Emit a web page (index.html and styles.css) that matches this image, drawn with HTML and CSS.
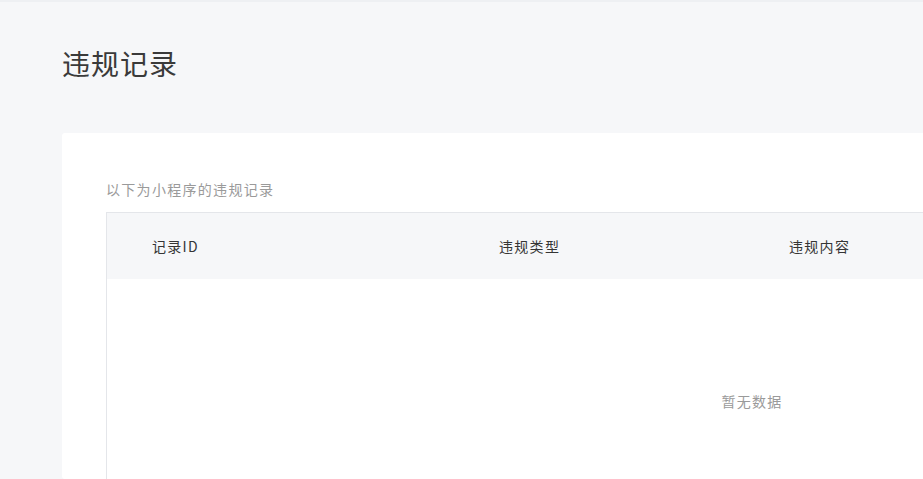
FILE: index.html
```html
<!DOCTYPE html>
<html lang="zh">
<head>
<meta charset="utf-8">
<title>违规记录</title>
<link rel="stylesheet" href="styles.css">
</head>
<body>
<div class="page">
  <h1 class="title">违规记录</h1>
  <div class="card">
    <p class="desc">以下为小程序的违规记录</p>
    <div class="table">
      <div class="thead">
        <div class="th">记录ID</div>
        <div class="th">违规类型</div>
        <div class="th">违规内容</div>
      </div>
      <div class="empty">暂无数据</div>
    </div>
  </div>
</div>
</body>
</html>
```
FILE: styles.css
```css
html, body {
  margin: 0;
  padding: 0;
  overflow: hidden;
  background: #f6f7f9;
  font-family: "Noto Sans CJK SC", "Noto Sans", sans-serif;
}
.page {
  border-top: 2px solid #eef0f3;
  padding: 0 0 0 62px;
  width: 1500px;
  height: 477px;
  overflow: hidden;
}
.title {
  margin: 0;
  padding-top: 43px;
  font-size: 28px;
  line-height: 36px;
  letter-spacing: 1px;
  font-weight: 400;
  color: #3a3a3a;
  box-sizing: border-box;
  height: 131px;
}
.card {
  background: #fff;
  border-radius: 3px;
  padding: 46px 0 0 44px;
  height: 300px;
}
.desc {
  margin: 0;
  font-size: 14px;
  line-height: 20px;
  letter-spacing: 1.3px;
  color: #9a9a9a;
}
.table {
  margin-top: 13px;
  width: 1290px;
  border-top: 1px solid #e4e6ea;
  border-left: 1px solid #e4e6ea;
}
.thead {
  display: grid;
  grid-template-columns: 347px 290px 1fr;
  background: #f6f7f9;
  height: 66px;
  align-items: center;
}
.th {
  padding-left: 45px;
  font-size: 14px;
  letter-spacing: 1.3px;
  color: #353535;
}
.empty {
  text-align: center;
  padding-top: 112px;
  font-size: 14px;
  line-height: 20px;
  letter-spacing: 1.3px;
  color: #9a9a9a;
  height: 88px;
}
```
